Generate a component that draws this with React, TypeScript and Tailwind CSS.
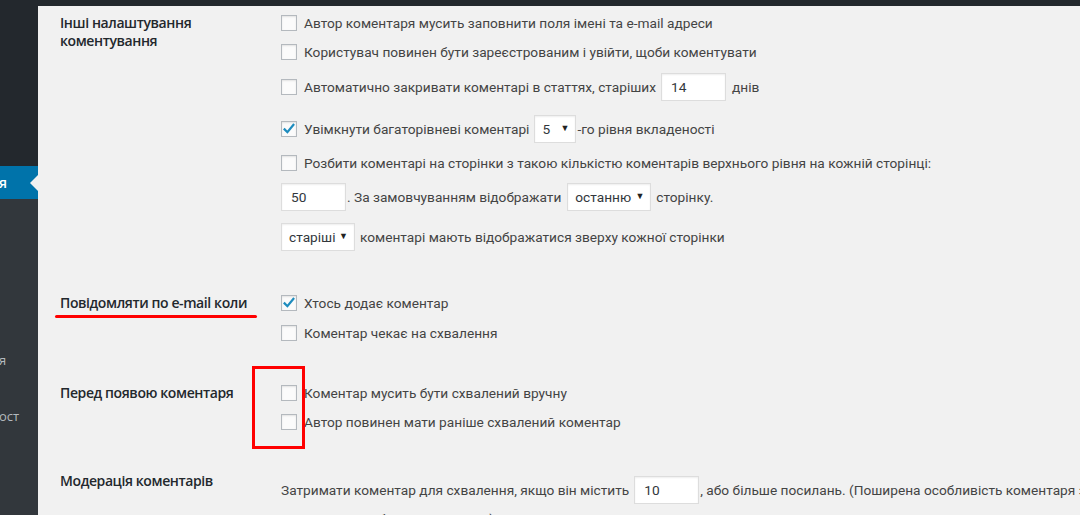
import React from "react";

const font = { fontFamily: 'Roboto, "Open Sans", sans-serif' };

function Check({ checked = false }: { checked?: boolean }) {
  return (
    <span className="relative inline-flex h-[16px] w-[16px] shrink-0 items-center justify-center border border-[#b4b9be] bg-[#fbfbfb] shadow-[inset_0_1px_2px_rgba(0,0,0,0.1)]">
      {checked && (
        <svg width="14" height="14" viewBox="0 0 14 14" className="absolute left-[0px] top-[0px]">
          <path d="M2.6 7.4 L5.4 10.2 L11.4 2.8" fill="none" stroke="#1e8cbe" strokeWidth="2.2" strokeLinecap="square" />
        </svg>
      )}
    </span>
  );
}

function TextBox({ value, w }: { value: string; w: string }) {
  return (
    <span className={`inline-flex h-[28px] items-center border border-[#ddd] bg-white px-[9px] text-[13.7px] text-[#32373c] shadow-[inset_0_1px_2px_rgba(0,0,0,0.07)] ${w}`}>
      {value}
    </span>
  );
}

function Select({ value, w }: { value: string; w: string }) {
  return (
    <span className={`inline-flex h-[28px] items-center justify-between border border-[#ddd] bg-white pl-[7px] pr-[6px] text-[13.7px] text-[#32373c] shadow-[inset_0_1px_2px_rgba(0,0,0,0.07)] ${w}`}>
      <span>{value}</span>
      <span className="text-[9px] text-[#222]">▼</span>
    </span>
  );
}

function Row({ children, className = "" }: { children: React.ReactNode; className?: string }) {
  return <div className={`flex h-[28px] items-center whitespace-nowrap text-[13.7px] text-[#444] ${className}`}>{children}</div>;
}

function Label({ children }: { children: React.ReactNode }) {
  return (
    <div
      className="w-[221px] shrink-0 pt-[5px] text-[14px] font-semibold leading-[18px] tracking-[-0.4px] text-[#23282d]"
      style={{ fontFamily: '"Open Sans", "Noto Sans", sans-serif' }}
    >
      {children}
    </div>
  );
}

export default function App() {
  return (
    <div className="flex h-[515px] w-[1080px] flex-col overflow-hidden bg-[#f1f1f1]" style={font}>
      <div className="h-[6px] w-full shrink-0 bg-[#23282d]" />
      <div className="flex min-h-0 flex-1">
        {/* sidebar */}
        <div className="flex w-[38px] shrink-0 flex-col overflow-hidden" style={{ fontFamily: '"Open Sans", sans-serif' }}>
          <div className="h-[160px] shrink-0 bg-[#23282d]" />
          <div className="flex h-[33px] shrink-0 items-center justify-between bg-[#0073aa]">
            <span className="-ml-[1px] text-[14px] font-semibold text-white">я</span>
            <span className="h-0 w-0 border-y-[8px] border-r-[8px] border-y-transparent border-r-[#f1f1f1]" />
          </div>
          <div className="flex flex-1 flex-col bg-[#32373c] text-[13px] text-[#b4b9be]">
            <span className="-ml-[1px] mt-[152px] leading-[18px]">я</span>
            <span className="-ml-[1px] mt-[38px] leading-[18px]">ост</span>
          </div>
        </div>

        {/* content */}
        <div className="relative flex min-w-0 flex-1 flex-col pl-[22px]">
          {/* section 1 */}
          <div className="mt-[3px] flex">
            <Label>
              Інші налаштування
              <br />
              коментування
            </Label>
            <div className="flex flex-col">
              <Row>
                <Check />
                <span className="ml-[7px]">Автор коментаря мусить заповнити поля імені та e-mail адреси</span>
              </Row>
              <Row className="mt-[1px]">
                <Check />
                <span className="ml-[7px]">Користувач повинен бути зареєстрованим і увійти, щоби коментувати</span>
              </Row>
              <Row className="mt-[7px]">
                <Check />
                <span className="ml-[7px]">Автоматично закривати коментарі в статтях, старіших</span>
                <span className="ml-[5px]">
                  <TextBox value="14" w="w-[65px]" />
                </span>
                <span className="ml-[6px]">днів</span>
              </Row>
              <Row className="mt-[14px]">
                <Check checked />
                <span className="ml-[7px]">Увімкнути багаторівневі коментарі</span>
                <span className="ml-[5px]">
                  <Select value="5" w="w-[42px]" />
                </span>
                <span className="ml-[1px]">-го рівня вкладеності</span>
              </Row>
              <Row className="mt-[6px]">
                <Check />
                <span className="ml-[7px]">Розбити коментарі на сторінки з такою кількістю коментарів верхнього рівня на кожній сторінці:</span>
              </Row>
              <Row className="mt-[6px]">
                <TextBox value="50" w="w-[65px]" />
                <span className="ml-[1px]">. За замовчуванням відображати</span>
                <span className="ml-[6px]">
                  <Select value="останню" w="w-[84px]" />
                </span>
                <span className="ml-[5px]">сторінку.</span>
              </Row>
              <Row className="mt-[12px]">
                <Select value="старіші" w="w-[74px]" />
                <span className="ml-[5px]">коментарі мають відображатися зверху кожної сторінки</span>
              </Row>
            </div>
          </div>

          {/* section 2 */}
          <div className="mt-[38px] flex">
            <Label>Повідомляти по e-mail коли</Label>
            <div className="flex flex-col">
              <Row>
                <Check checked />
                <span className="ml-[7px]">Хтось додає коментар</span>
              </Row>
              <Row className="mt-[2px]">
                <Check />
                <span className="ml-[7px]">Коментар чекає на схвалення</span>
              </Row>
            </div>
          </div>

          {/* section 3 */}
          <div className="mt-[32px] flex">
            <Label>Перед появою коментаря</Label>
            <div className="flex flex-col">
              <Row>
                <Check />
                <span className="ml-[7px]">Коментар мусить бути схвалений вручну</span>
              </Row>
              <Row className="mt-[1px]">
                <Check />
                <span className="ml-[7px]">Автор повинен мати раніше схвалений коментар</span>
              </Row>
            </div>
          </div>

          {/* section 4 */}
          <div className="mt-[31px] flex">
            <Label>Модерація коментарів</Label>
            <div className="flex flex-col pt-[9px] text-[13.7px] text-[#444]">
              <Row>
                <span>Затримати коментар для схвалення, якщо він містить</span>
                <span className="ml-[5px]">
                  <TextBox value="10" w="w-[65px]" />
                </span>
                <span className="ml-[1px]">, або більше посилань. (Поширена особливість коментаря зі спамом — те,</span>
              </Row>
              <div className="mt-[5px] leading-[20px]">що він містить багато посилань.)</div>
            </div>
          </div>

          {/* annotations */}
          <div className="pointer-events-none absolute left-[17px] top-[309px] h-[3px] w-[202px] rounded-full bg-[#f00]" />
          <div className="pointer-events-none absolute left-[214px] top-[360px] h-[83px] w-[53px] border-[3px] border-[#f00]" />
        </div>
      </div>
    </div>
  );
}
